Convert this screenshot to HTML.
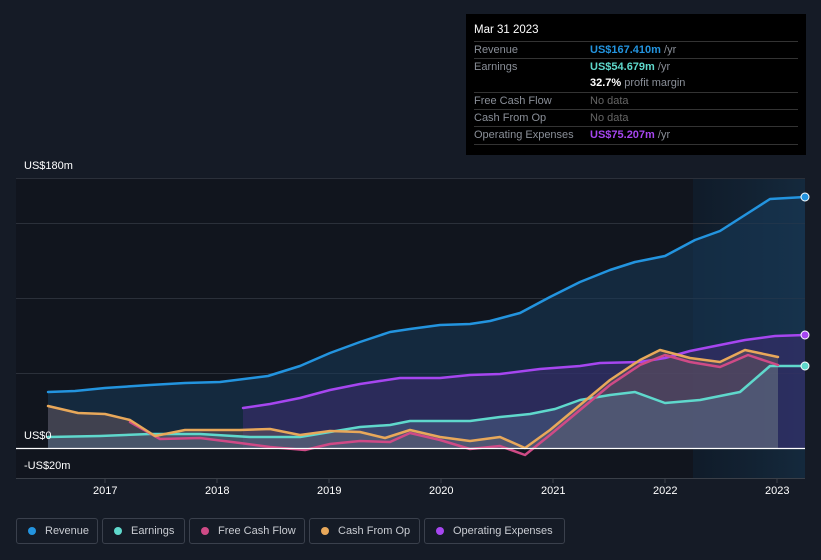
<!DOCTYPE html>
<html><head><meta charset="utf-8"><style>
html,body{margin:0;padding:0;background:#151b26;width:821px;height:560px;overflow:hidden;font-family:"Liberation Sans",sans-serif}
.tt{position:absolute;left:466px;top:14px;width:340px;height:141px;background:#000;font-size:11px;color:#8a8f98}
.tt .d{position:absolute;left:8px;top:10px;color:#fff;font-size:11.5px}
.row{position:absolute;left:8px;width:324px;border-top:1px solid #333;height:17px;line-height:17px}
.row span{position:absolute;left:116px}
.leg{position:absolute;top:518px;height:26px;border:1px solid #3a404c;border-radius:3px;box-sizing:border-box;color:#c9ccd2;font-size:11px;line-height:24px;padding-left:28px}
.leg i{position:absolute;left:11px;top:8px;width:8px;height:8px;border-radius:50%}
.ax{position:absolute;color:#fff;font-size:11px}
</style></head><body>
<svg width="821" height="560" style="position:absolute;left:0;top:0">
<defs>
<linearGradient id="hl" x1="0" x2="1"><stop offset="0" stop-color="#0f2235" stop-opacity=".5"/><stop offset="1" stop-color="#16324a" stop-opacity=".7"/></linearGradient>
</defs>
<rect x="16" y="178" width="789" height="300" fill="#11151e"/>
<rect x="693" y="178" width="112" height="300" fill="url(#hl)"/>
<g stroke="#2b303a" stroke-width="1">
<line x1="16" y1="178.5" x2="805" y2="178.5"/><line x1="16" y1="223.5" x2="805" y2="223.5"/>
<line x1="16" y1="298.5" x2="805" y2="298.5"/><line x1="16" y1="373.5" x2="805" y2="373.5"/>
<line x1="16" y1="478.5" x2="805" y2="478.5" stroke="#3a3f48"/>
</g>
<polygon fill="#173a5a" fill-opacity=".55" points="48,392 75,391 105,388 150,385 185,383 220,382 268,376 300,366 330,353 360,342 390,332 410,329 440,325 470,324 490,321 520,313 550,297 580,282 610,270 635,262 665,256 695,240 720,231 745,215 770,199 805,197 805,448 48,448"/>
<polygon fill="#3a2d6e" fill-opacity=".6" points="243,408 270,404 300,398 330,390 360,384 400,378 440,378 470,375 500,374 540,369 580,366 600,363 640,362 665,358 690,351 720,345 745,340 775,336 805,335 805,448 243,448"/>
<polygon fill="#6b5a60" fill-opacity=".5" points="48,406 78,413 105,414 130,420 155,436 185,430 215,430 240,430 270,429 300,435 330,431 360,432 385,438 410,430 440,437 470,441 500,437 525,448 550,430 580,405 610,380 640,360 660,350 690,358 720,362 745,350 778,357 778,448 48,448"/>
<polygon fill="#5a7a9a" fill-opacity=".35" points="48,437 100,436 150,434 200,434 250,437 300,437 330,432 360,427 390,425 410,421 440,421 470,421 500,417 530,414 555,409 580,400 610,395 635,392 665,403 700,400 740,392 770,366 778,366 778,448 48,448"/>
<g fill="none" stroke-width="2.5" stroke-linejoin="round" stroke-linecap="round">
<polyline stroke="#2394df" points="48,392 75,391 105,388 150,385 185,383 220,382 268,376 300,366 330,353 360,342 390,332 410,329 440,325 470,324 490,321 520,313 550,297 580,282 610,270 635,262 665,256 695,240 720,231 745,215 770,199 805,197"/>
<polyline stroke="#a646f0" points="243,408 270,404 300,398 330,390 360,384 400,378 440,378 470,375 500,374 540,369 580,366 600,363 640,362 665,358 690,351 720,345 745,340 775,336 805,335"/>
<polyline stroke="#5fd8cc" points="48,437 100,436 150,434 200,434 250,437 300,437 330,432 360,427 390,425 410,421 440,421 470,421 500,417 530,414 555,409 580,400 610,395 635,392 665,403 700,400 740,392 770,366 805,366"/>
<polyline stroke="#cf4a86" points="130,422 160,439 200,438 240,443 270,447 305,450 330,444 360,441 390,442 410,433 440,440 470,449 500,446 525,455 550,435 580,410 610,385 640,365 665,355 690,362 720,367 748,355 778,365"/>
<polyline stroke="#e8a85a" points="48,406 78,413 105,414 130,420 155,436 185,430 215,430 240,430 270,429 300,435 330,431 360,432 385,438 410,430 440,437 470,441 500,437 525,448 550,430 580,405 610,380 640,360 660,350 690,358 720,362 745,350 778,357"/>
</g>
<line x1="16" y1="448.5" x2="805" y2="448.5" stroke="#fff" stroke-width="1.2"/>
<circle cx="805" cy="197" r="4" fill="#2394df" stroke="#fff"/>
<circle cx="805" cy="335" r="4" fill="#a646f0" stroke="#fff"/>
<circle cx="805" cy="366" r="4" fill="#5fd8cc" stroke="#fff"/>
<g stroke="#3a3f48"><line x1="105" y1="478" x2="105" y2="483"/><line x1="217" y1="478" x2="217" y2="483"/><line x1="329" y1="478" x2="329" y2="483"/><line x1="441" y1="478" x2="441" y2="483"/><line x1="553" y1="478" x2="553" y2="483"/><line x1="665" y1="478" x2="665" y2="483"/><line x1="777" y1="478" x2="777" y2="483"/></g>
</svg>
<div class="ax" style="left:24px;top:160px">US$180m</div>
<div class="ax" style="left:24px;top:430px">US$0</div>
<div class="ax" style="left:24px;top:460px">-US$20m</div>
<div class="ax" style="left:93px;top:485px">2017</div>
<div class="ax" style="left:205px;top:485px">2018</div>
<div class="ax" style="left:317px;top:485px">2019</div>
<div class="ax" style="left:429px;top:485px">2020</div>
<div class="ax" style="left:541px;top:485px">2021</div>
<div class="ax" style="left:653px;top:485px">2022</div>
<div class="ax" style="left:765px;top:485px">2023</div>
<div class="tt">
<div class="d">Mar 31 2023</div>
<div class="row" style="top:27px">Revenue<span><b style="color:#2394df">US$167.410m</b> /yr</span></div>
<div class="row" style="top:44px">Earnings<span><b style="color:#5fd8cc">US$54.679m</b> /yr</span></div>
<div class="row" style="top:61px;border-top:none"><span><b style="color:#fff">32.7%</b> profit margin</span></div>
<div class="row" style="top:78px">Free Cash Flow<span style="color:#666">No data</span></div>
<div class="row" style="top:95px">Cash From Op<span style="color:#666">No data</span></div>
<div class="row" style="top:112px;border-bottom:1px solid #333">Operating Expenses<span><b style="color:#a646f0">US$75.207m</b> /yr</span></div>
</div>
<div class="leg" style="left:16px;width:82px"><i style="background:#2394df"></i>Revenue</div>
<div class="leg" style="left:102px;width:83px"><i style="background:#5fd8cc"></i>Earnings</div>
<div class="leg" style="left:189px;width:116px"><i style="background:#cf4a86"></i>Free Cash Flow</div>
<div class="leg" style="left:309px;width:111px"><i style="background:#e8a85a"></i>Cash From Op</div>
<div class="leg" style="left:424px;width:141px"><i style="background:#a646f0"></i>Operating Expenses</div>
</body></html>
